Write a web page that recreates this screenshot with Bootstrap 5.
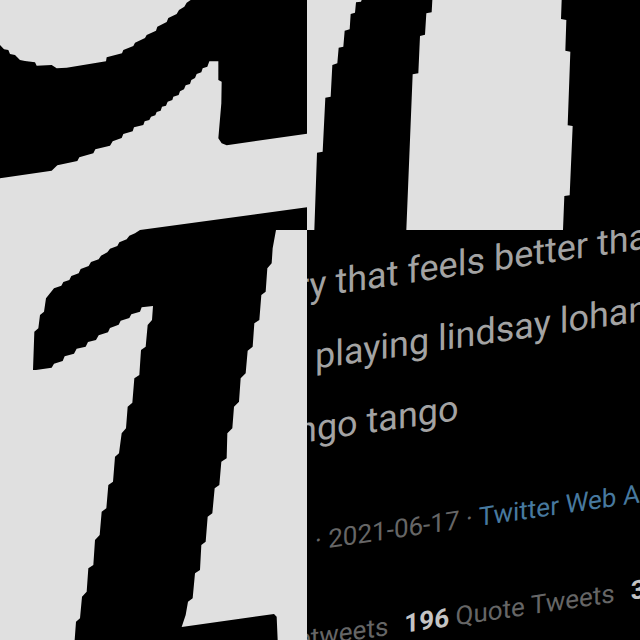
<!DOCTYPE html>
<html lang="en">
<head>
<meta charset="utf-8">
<meta name="viewport" content="width=device-width, initial-scale=1">
<title>Tweet collage</title>
<link href="https://cdn.jsdelivr.net/npm/bootstrap@5.3.0/dist/css/bootstrap.min.css" rel="stylesheet">
<style>
  body { background: #000; font-family: Roboto, sans-serif; }
  .collage { grid-template-columns: 307fr 333fr; grid-template-rows: 230fr 410fr; }
  .tile { background: #e0e0e0; min-width: 0; min-height: 0; }
  .post { background: #000; color: #666; min-width: 0; min-height: 0; }
  .slant { transform: skewY(-8.3deg); transform-origin: 0 0; gap: 56px; padding-top: 20px; }
  .message { font-size: 36px; line-height: 72px; color: #a3a3a3; }
  .details { font-size: 26px; line-height: 40px; }
  .cut { margin-left: -10px; }
  .inset { margin-left: 8px; }
  .source { color: #47799f; }
  .figure-count { color: #c4c4c4; }
</style>
</head>
<body>
<main class="collage d-grid vh-100 overflow-hidden">
  <div class="tile overflow-hidden">
    <svg class="d-block w-100 h-100" viewBox="0 0 921 690" preserveAspectRatio="none" aria-hidden="true">
      <path d="M0 135L12 148 25 150 30 162 45 165 60 180 75 183 105 187 110 197 155 195 170 205 200 203 318 184 320 172 366 160 370 150 400 138 405 128 435 114 440 105 468 92 472 80 500 66 505 54 530 42 537 30 553 20 560 8 572 0H921V401L680 436 665 430 655 415 664 310 665 245 655 240V184H628L622 200 608 205 604 217 590 222 585 234 574 240 570 252 557 256 552 268 540 274 536 285 520 290 517 300 503 305 498 317 486 320 482 332 470 336 466 346 453 350 448 360 434 364 430 375 402 382 398 394 370 402 365 414 338 424 330 437 286 448 280 460 238 472 232 483 172 496 155 512 0 535Z"/>
      <path d="M385 690L420 690 921 622V690Z"/>
    </svg>
  </div>
  <div class="tile overflow-hidden">
    <svg class="d-block w-100 h-100" viewBox="21 0 999 690" preserveAspectRatio="none" aria-hidden="true">
      <path d="M185 0L183 5 168 7 165 38 152 42 149 88 134 92 130 140 116 143 112 190 97 195 92 290 76 293 68 455 51 458 43 690H319L338 223 355 220 360 108 375 104 379 40 395 37 397 0Z"/>
      <path d="M785 0L783 57 799 60 796 152 811 155 803 376 818 378 809 586 793 588 789 690H1020V0Z"/>
    </svg>
  </div>
  <div class="tile overflow-hidden">
    <svg class="d-block w-100 h-100" viewBox="0 30 921 1230" preserveAspectRatio="none" aria-hidden="true">
      <path d="M420 30H828L818 85 815 130 802 145 797 215 784 225 778 300 763 310 758 380 743 392 737 460 722 475 717 545 702 560 697 625 682 640 680 715 664 725 658 795 644 805 637 880 623 890 617 965 604 975 600 1050 585 1060 578 1135 564 1145 557 1185 545 1221 822 1182 830 1190 833 1260H224L228 1205 240 1195 246 1130 260 1115 265 1045 280 1035 285 960 299 945 305 875 319 865 325 795 339 785 345 710 357 700 365 640 378 625 383 560 397 548 403 475 418 465 423 390 437 380 443 315 456 300 459 258 425 262 420 275 394 283 388 294 362 302 356 314 330 324 324 337 296 346 288 360 264 366 257 380 230 386 222 401 194 409 188 423 162 431 155 443 108 450H99L103 335 115 325 120 285 132 275 138 235 150 220 162 205 184 197 190 186 208 180 214 168 236 160 242 147 266 138 273 126 296 118 303 107 322 97 330 86 352 78 358 67 380 58 388 47 405 40Z"/>
    </svg>
  </div>
  <article class="post overflow-hidden">
    <div class="slant d-flex flex-column text-nowrap">
      <div class="message">
        <div class="cut">ry that feels better tha</div>
        <div class="inset">playing lindsay lohan</div>
        <div class="cut">ngo tango</div>
      </div>
      <div class="details inset">· 2021-06-17 · <a class="source text-decoration-none" href="#">Twitter Web A</a></div>
      <div class="details cut d-flex gap-3"><span>etweets</span><span><strong class="figure-count">196</strong> Quote Tweets</span><strong class="figure-count">3</strong></div>
    </div>
  </article>
</main>
<script src="https://cdn.jsdelivr.net/npm/bootstrap@5.3.0/dist/js/bootstrap.bundle.min.js"></script>
</body>
</html>
